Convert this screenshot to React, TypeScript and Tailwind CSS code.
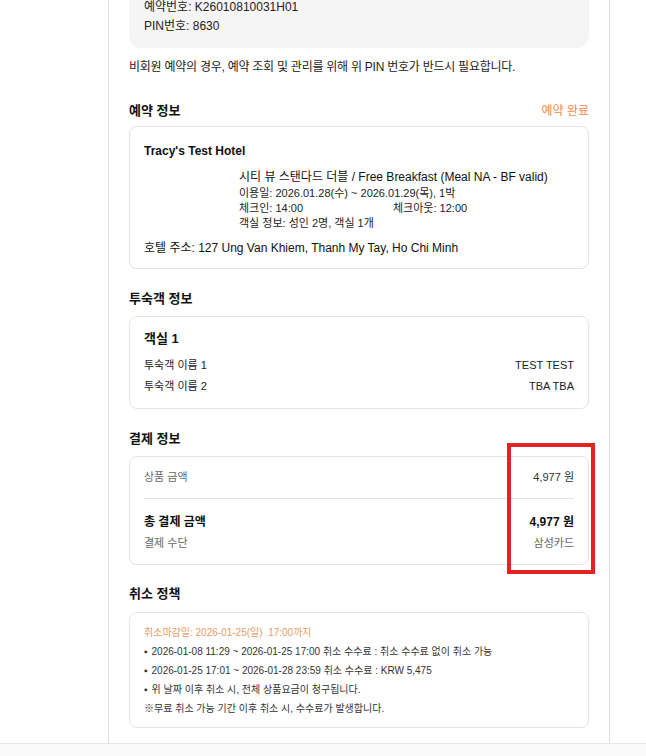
import React from 'react';

const cardCls = "rounded-lg border border-[#e3e3e3] bg-white";

const SectionTitle = ({ title, right, mb = 'mb-[7px]' }: { title: string; right?: React.ReactNode; mb?: string }) => (
  <div className={`flex h-[20px] items-center justify-between ${mb}`}>
    <h2 className="text-[13px] leading-[20px] font-bold text-[#111]">{title}</h2>
    {right}
  </div>
);

const Row = ({ label, value, className = '' }: { label: string; value: string; className?: string }) => (
  <div className={`flex h-[21px] items-center justify-between text-[11px] leading-[21px] ${className}`}>
    <span>{label}</span>
    <span>{value}</span>
  </div>
);

export default function App() {
  return (
    <div className="w-[646px] min-h-[756px] bg-white font-['Liberation_Sans','Noto_Sans_CJK_KR',sans-serif] text-[#222] overflow-hidden">
      {/* Main column */}
      <div className="ml-[108px] w-[502px] border-x border-[#dedede] px-5 pb-[15px]">
        {/* Reservation number box */}
        <div className="-mt-[2px] rounded-b-xl bg-[#f5f5f5] px-[15px] pb-[12px] text-[12px] leading-[19px]">
          <p className="h-[19px]">예약번호: K26010810031H01</p>
          <p className="h-[19px]">PIN번호: 8630</p>
        </div>
        <p className="mt-[10px] h-[19px] text-[12px] leading-[19px] tracking-[-0.25px] text-[#222]">
          비회원 예약의 경우, 예약 조회 및 관리를 위해 위 PIN 번호가 반드시 필요합니다.
        </p>

        {/* 예약 정보 */}
        <section className="mt-[24px]">
          <SectionTitle
            title="예약 정보"
            mb="mb-[5px]"
            right={<span className="text-[12px] leading-[20px] text-[#f5894a]">예약 완료</span>}
          />
          <div className={`${cardCls} px-[14px] pt-[14px] pb-[10px]`}>
            <p className="h-[20px] text-[12px] leading-[20px] font-bold text-[#111]">Tracy's Test Hotel</p>
            <div className="flex mt-[8px]">
              <div className="w-[95px] shrink-0" />
              <div>
                <p className="h-[17px] text-[12px] leading-[17px] text-[#111]">
                  시티 뷰 스탠다드 더블 / Free Breakfast (Meal NA - BF valid)
                </p>
                <div className="text-[11px] leading-[15px]">
                  <p className="h-[15px]">이용일: 2026.01.28(수) ~ 2026.01.29(목), 1박</p>
                  <div className="flex h-[15px]">
                    <p className="w-[154px]">체크인: 14:00</p>
                    <p>체크아웃: 12:00</p>
                  </div>
                  <p className="h-[15px]">객실 정보: 성인 2명, 객실 1개</p>
                </div>
              </div>
            </div>
            <p className="mt-[7px] h-[20px] text-[12px] leading-[20px] text-[#111]">
              호텔 주소: 127 Ung Van Khiem, Thanh My Tay, Ho Chi Minh
            </p>
          </div>
        </section>

        {/* 투숙객 정보 */}
        <section className="mt-[20px]">
          <SectionTitle title="투숙객 정보" />
          <div className={`${cardCls} px-[14px] pt-[12px] pb-[11px]`}>
            <p className="h-[20px] text-[13px] leading-[20px] font-bold text-[#111] mb-[6px]">객실 1</p>
            <Row label="투숙객 이름 1" value="TEST TEST" />
            <Row label="투숙객 이름 2" value="TBA TBA" />
          </div>
        </section>

        {/* 결제 정보 */}
        <section className="mt-[20px] relative">
          <SectionTitle title="결제 정보" />
          <div className={`${cardCls} px-[14px] pt-[10px] pb-[10px]`}>
            <Row label="상품 금액" value="4,977 원" className="text-[#666] [&>span:last-child]:text-[#333]" />
            <div className="mt-[10px] mb-[12px] border-t border-[#e3e3e3]" />
            <div className="flex h-[22px] items-center justify-between text-[12px] leading-[22px] font-bold text-[#111]">
              <span>총 결제 금액</span>
              <span>4,977 원</span>
            </div>
            <Row label="결제 수단" value="삼성카드" className="text-[#666]" />
          </div>
          {/* annotation overlay */}
          <div className="absolute left-[378px] top-[14px] w-[88px] h-[131px] border-4 border-[#e32222]" />
        </section>

        {/* 취소 정책 */}
        <section className="mt-[19px]">
          <SectionTitle title="취소 정책" mb="mb-[8px]" />
          <div className={`${cardCls} px-[14px] pt-[10px] pb-[9px] text-[10px] leading-[19px] text-[#333]`}>
            <p className="h-[19px] text-[#e99a63]">취소마감일: 2026-01-25(일)&nbsp; 17:00까지</p>
            <ul>
              <li className="flex h-[19px] gap-[4px]"><span>▪</span><span>2026-01-08 11:29 ~ 2026-01-25 17:00 취소 수수료 : 취소 수수료 없이 취소 가능</span></li>
              <li className="flex h-[19px] gap-[4px]"><span>▪</span><span>2026-01-25 17:01 ~ 2026-01-28 23:59 취소 수수료 : KRW 5,475</span></li>
              <li className="flex h-[19px] gap-[4px]"><span>▪</span><span>위 날짜 이후 취소 시, 전체 상품요금이 청구됩니다.</span></li>
            </ul>
            <p className="h-[19px]">※무료 취소 가능 기간 이후 취소 시, 수수료가 발생합니다.</p>
          </div>
        </section>
      </div>
      {/* Footer band */}
      <div className="h-[40px] border-t border-[#e6e6e6] bg-[#fafafa]" />
    </div>
  );
}
